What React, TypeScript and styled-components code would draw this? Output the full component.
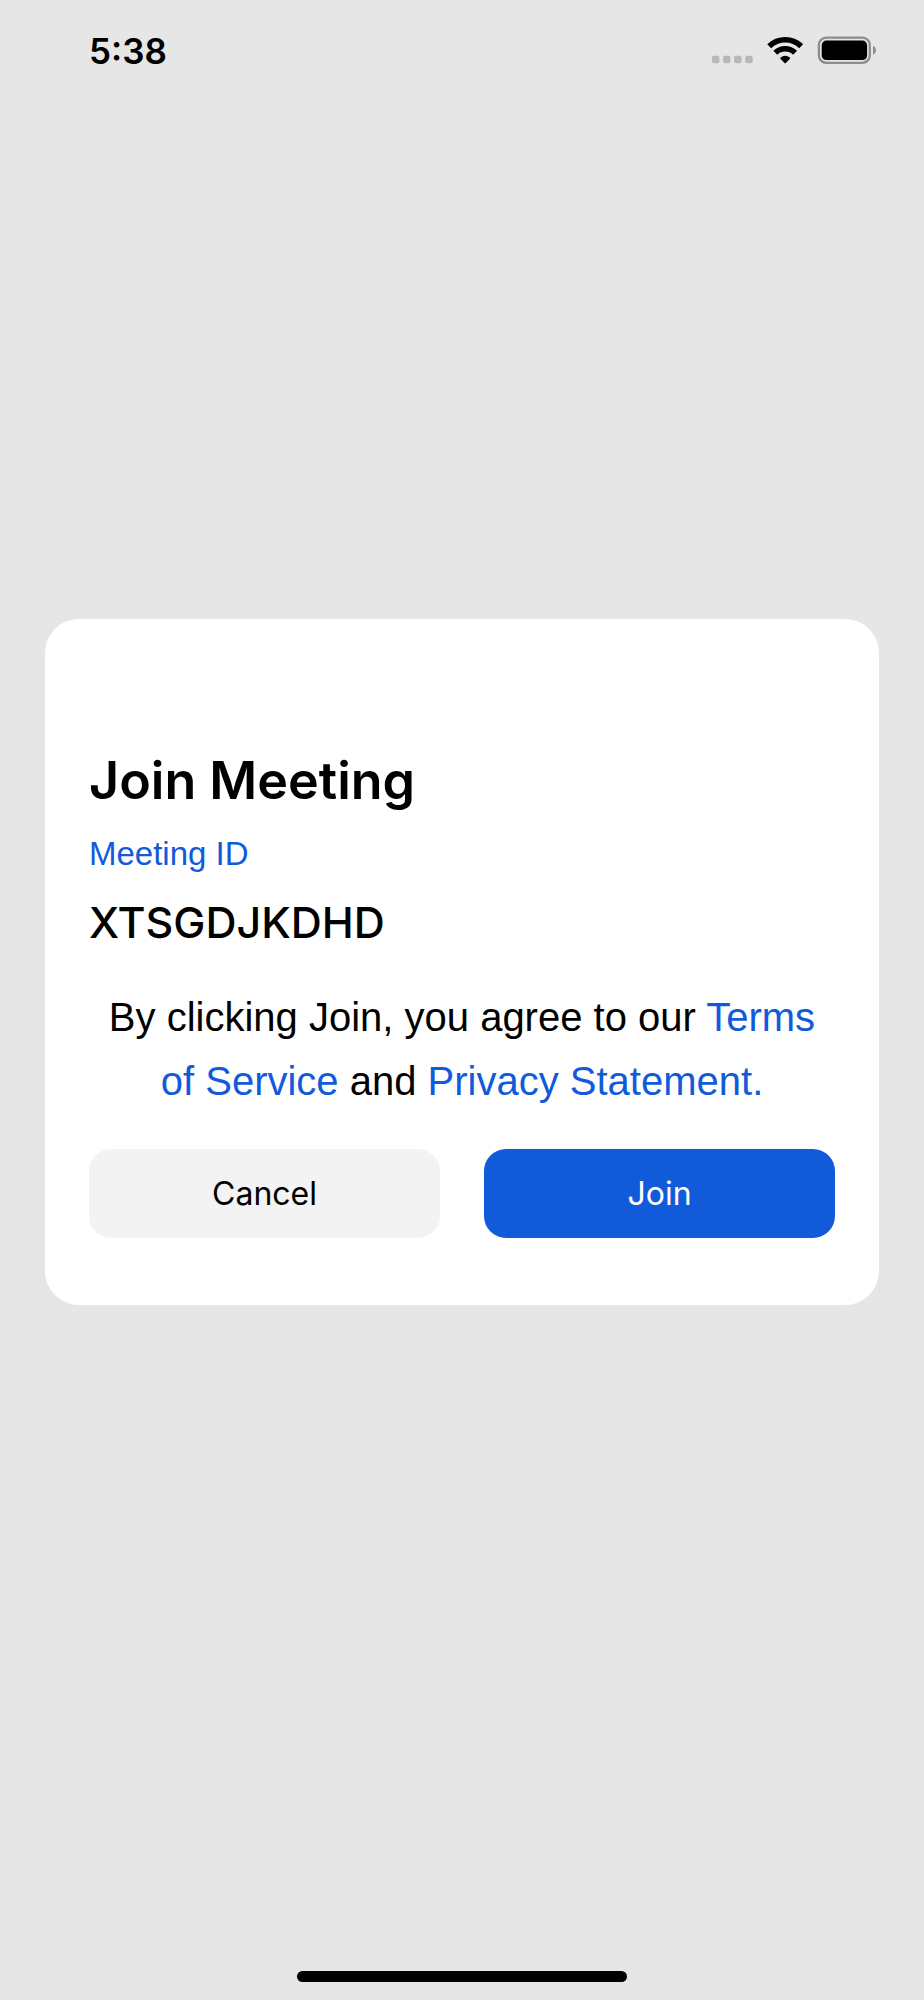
import React from 'react';
import styled, { createGlobalStyle } from 'styled-components';

const GlobalStyle = createGlobalStyle`
  * { box-sizing: border-box; }
  body { margin: 0; background: #e6e6e6; }
`;

const ui = `Inter, "Liberation Sans", sans-serif`;
const body = `"Liberation Sans", Arial, sans-serif`;
const blue = '#115bdb';

const Screen = styled.div`
  min-height: 100vh;
  display: flex;
  flex-direction: column;
  background: #e6e6e6;
  color: #000;
  font-family: ${body};
`;

const StatusBar = styled.header`
  height: 100px;
  padding: 30px 48px 0 89px;
  display: flex;
  align-items: flex-start;
  justify-content: space-between;
`;

const Clock = styled.time`
  font: 600 35px/42px ${ui};
`;

const StatusIcons = styled.div`
  display: flex;
  align-items: flex-end;
  gap: 14px;
  padding-top: 6px;
  svg { display: block; }
`;

const Main = styled.main`
  flex: 1;
  display: flex;
  flex-direction: column;
  justify-content: center;
  padding: 0 45px;
`;

const Card = styled.form`
  padding: 130px 44px 67px;
  border-radius: 34px;
  background: #fff;
`;

const Title = styled.h1`
  margin: 0 0 21px;
  font: 600 52px/64px ${ui};
`;

const FieldLabel = styled.label`
  display: block;
  margin-bottom: 20px;
  color: ${blue};
  font-size: 33px;
  line-height: 40px;
`;

const FieldInput = styled.input`
  display: block;
  width: 100%;
  height: 56px;
  margin: 0 0 35px;
  padding: 0;
  border: 0;
  outline: 0;
  background: transparent;
  color: #000;
  font: 500 43px/56px ${ui};
`;

const Terms = styled.p`
  margin: 0 0 36px;
  padding: 0 10px;
  text-align: center;
  font-size: 40px;
  line-height: 64px;
`;

const Link = styled.a`
  color: ${blue};
  text-decoration: none;
`;

const Actions = styled.div`
  display: grid;
  grid-template-columns: 1fr 1fr;
  gap: 44px;
`;

const Button = styled.button<{ $primary?: boolean }>`
  height: 89px;
  padding: 0;
  border: 0;
  border-radius: 22px;
  background: ${(p) => (p.$primary ? blue : '#f3f3f3')};
  color: ${(p) => (p.$primary ? '#fff' : '#000')};
  font: 400 32px/40px ${ui};
  cursor: pointer;
`;

const Footer = styled.footer`
  height: 176px;
  padding-bottom: 18px;
  display: flex;
  align-items: flex-end;
  justify-content: center;
`;

const HomeIndicator = styled.div`
  width: 330px;
  height: 11px;
  border-radius: 6px;
  background: #000;
`;

const SignalDots = () => (
  <svg width="42" height="28" viewBox="0 0 42 28" fill="#b8b8b8" aria-hidden="true">
    {[0.9, 12, 23.1, 34.2].map((x) => (
      <rect key={x} x={x} y="19.8" width="7.5" height="7.5" rx="2" />
    ))}
  </svg>
);

const WifiIcon = () => (
  <svg width="36" height="28" viewBox="0 0 36 28" aria-hidden="true">
    <g fill="none" stroke="#000" strokeWidth="5.6">
      <path d="M2.2 10.2 A23.2 23.2 0 0 1 34.2 10.2" />
      <path d="M8.3 16.7 A14.2 14.2 0 0 1 28.1 16.7" />
    </g>
    <path
      d="M13.4 21.8 Q18.2 17.8 23 21.8 Q23.4 22.3 23 22.8 L18.8 27 Q18.2 27.5 17.6 27 L13.4 22.8 Q13 22.3 13.4 21.8Z"
      fill="#000"
    />
  </svg>
);

const BatteryIcon = () => (
  <svg width="59" height="28" viewBox="0 0 59 28" aria-hidden="true">
    <rect x="1.9" y="1.6" width="50.9" height="25.2" rx="7.4" fill="none" stroke="#8c8c8c" strokeWidth="2.3" />
    <rect x="4.7" y="4.6" width="45.4" height="19.4" rx="4.6" fill="#000" />
    <path d="M56 10 Q59 11.4 59 14.3 Q59 17.2 56 18.6Z" fill="#8c8c8c" />
  </svg>
);

export default function App() {
  return (
    <>
      <GlobalStyle />
      <Screen>
        <StatusBar>
          <Clock>5:38</Clock>
          <StatusIcons>
            <SignalDots />
            <WifiIcon />
            <BatteryIcon />
          </StatusIcons>
        </StatusBar>
        <Main>
          <Card onSubmit={(e) => e.preventDefault()}>
            <Title>Join Meeting</Title>
            <FieldLabel htmlFor="meeting-id">Meeting ID</FieldLabel>
            <FieldInput id="meeting-id" type="text" defaultValue="XTSGDJKDHD" />
            <Terms>
              By clicking Join, you agree to our <Link href="#terms">Terms of Service</Link> and{' '}
              <Link href="#privacy">Privacy Statement.</Link>
            </Terms>
            <Actions>
              <Button type="button">Cancel</Button>
              <Button type="submit" $primary>Join</Button>
            </Actions>
          </Card>
        </Main>
        <Footer>
          <HomeIndicator />
        </Footer>
      </Screen>
    </>
  );
}
